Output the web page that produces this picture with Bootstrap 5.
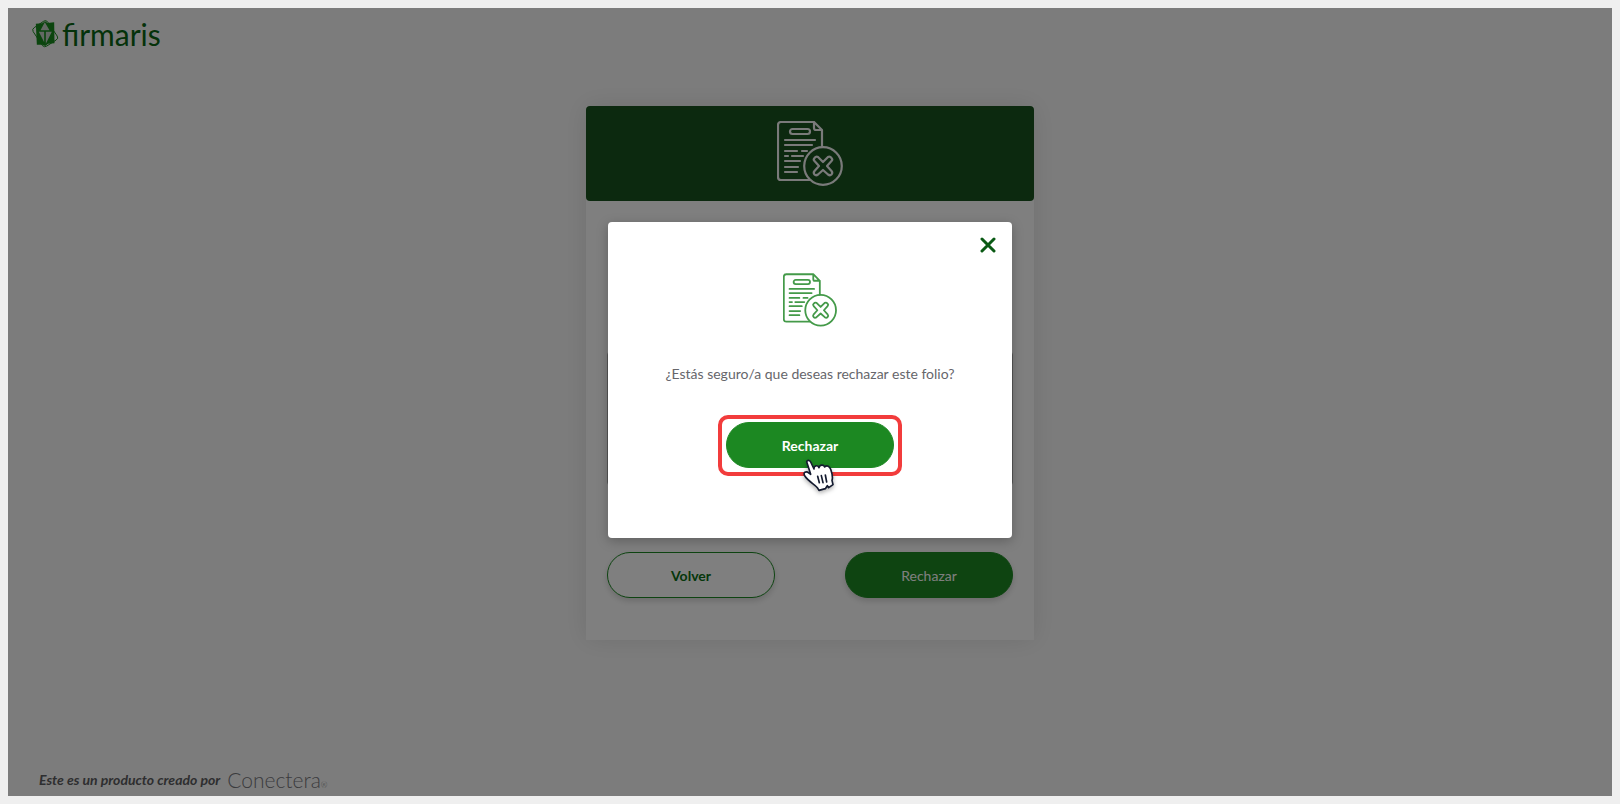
<!DOCTYPE html>
<html lang="es">
<head>
<meta charset="utf-8">
<meta name="viewport" content="width=device-width, initial-scale=1">
<title>firmaris</title>
<link href="https://cdn.jsdelivr.net/npm/bootstrap@5.3.0/dist/css/bootstrap.min.css" rel="stylesheet">
<style>
  body { font-family: Lato, sans-serif; font-size: 14px; background: #efefef; color: #66666b; }
  .app-screen { background: #f9f9f9; }
  .app-header { padding: 10px 24px 0; height: 98px; }
  .brand { color: #0a6414; font-size: 30px; line-height: 32px; gap: 3px; }
  .brand:hover { color: #0a6414; }
  .folio-card { width: 448px; max-width: 100%; background: #fff; box-shadow: 0 0 24px rgba(0,0,0,.1); }
  .folio-head { height: 95px; background: #18521e; color: #f4f4f4; border-radius: 4px; }
  .folio-body { padding: 150px 21px 42px; }
  .folio-body textarea { height: 135px; margin-bottom: 66px; border: 1px solid #aaa; border-radius: 4px; resize: none; }
  .btn-pill { width: 168px; height: 46px; border-radius: 23px; font-size: 14px; padding: 0; --bs-btn-border-color: #1c8822; --bs-btn-hover-border-color: #1c8822; }
  .btn-solid { --bs-btn-bg: #1c8822; --bs-btn-color: #fff; --bs-btn-hover-bg: #18751d; --bs-btn-hover-color: #fff; }
  .btn-hollow { --bs-btn-bg: #fff; --bs-btn-color: #0a6e14; --bs-btn-hover-bg: #eef7ee; --bs-btn-hover-color: #0a6e14; }
  .btn-lifted { box-shadow: 0 3px 6px rgba(0,0,0,.16); }
  .app-footer { padding: 0 31px 4px; color: #5c5c60; gap: 7px; line-height: 24px; }
  .maker { font-size: 21px; font-weight: 300; color: #77777c; }
  .maker sup { font-size: 8px; top: 0; }
  .dim { inset: 0; background: rgba(0,0,0,.5); }
  .modal { --bs-modal-width: 404px; --bs-modal-margin: 0px; --bs-modal-border-width: 0px; --bs-modal-border-radius: 4px; }
  .confirm-box { margin-top: 214px !important; }
  .confirm-box .modal-content { box-shadow: 0 3px 12px rgba(0,0,0,.25); padding-bottom: 62px; }
  .confirm-close { width: 16px; height: 16px; color: #0a5a14; margin: 15px 16px 20px auto; }
  .confirm-text { margin: 36px 0 30px; line-height: 22px; }
  .highlight { border: 4px solid #f23c3c; border-radius: 10px; padding: 3px 4px 4px; }
  .pointer { left: 80px; top: 40px; filter: drop-shadow(0 2px 2px rgba(0,0,0,.3)); pointer-events: none; }
</style>
</head>
<body>
<svg class="d-none" aria-hidden="true">
  <symbol id="doc-reject" viewBox="0 0 66 65">
    <g fill="none" stroke="currentColor" stroke-width="2.200" stroke-linecap="round" stroke-linejoin="round">
      <path d="M33 59H4Q1 59 1 56V4Q1 1 4 1H37L45 9V26M37 1V7Q37 9 39 9H45"/>
      <rect x="13" y="8" width="20" height="5" rx="2.500"/>
      <path d="M8 19H38M8 24H35M8 30H20M25 30H30M8 35H11M15 35H26M8 40H23M8 46H21M8 51H20"/>
      <circle cx="46" cy="45" r="18.800"/>
      <path d="M46 41L51 36Q53 35 54.500 37Q56 38.500 54.500 40L50 45L54.500 50Q56 52 54.500 53.500Q53 55 51 53.500L46 49L41 53.500Q39 55 37.500 53.500Q36 52 37.500 50L42 45L37.500 40Q36 38.500 37.500 37Q39 35 41 36Z"/>
    </g>
  </symbol>
</svg>
<div class="vh-100 p-2">
  <div class="app-screen h-100 position-relative d-flex flex-column">
    <header class="app-header">
      <a href="#" class="brand d-inline-flex align-items-center text-decoration-none">
        <svg width="27" height="28" viewBox="96 62 80 84" aria-hidden="true">
          <path fill="none" stroke="#168a1c" stroke-width="3" stroke-linejoin="round" d="M130 66Q136 61 142 67L171 110Q176 117 168 122L140 140Q133 145 127 139L99 97Q95 89 102 85Z"/>
          <path fill="#168a1c" d="M107 73L126 72L135 66L142 71L162 69L163 132L144 133L135 140L126 136L110 136Z"/>
          <path fill="#c9d3c9" d="M134 69L148 93H121ZM116 97H132V129ZM137 97H155L137 133Z"/>
        </svg>
        <span>firmaris</span>
      </a>
    </header>
    <main class="flex-grow-1">
      <section class="folio-card mx-auto">
        <div class="folio-head d-flex justify-content-center align-items-center">
          <svg width="66" height="65" aria-hidden="true"><use href="#doc-reject"/></svg>
        </div>
        <div class="folio-body">
          <textarea class="form-control" aria-label="Motivo"></textarea>
          <div class="d-flex justify-content-between">
            <button type="button" class="btn btn-pill btn-hollow btn-lifted fw-bold">Volver</button>
            <button type="button" class="btn btn-pill btn-solid btn-lifted">Rechazar</button>
          </div>
        </div>
      </section>
    </main>
    <footer class="app-footer d-flex align-items-center">
      <em class="fw-bold">Este es un producto creado por</em>
      <span class="maker">Conectera<sup>®</sup></span>
    </footer>
    <div class="dim position-absolute"></div>
    <div class="modal show d-block position-absolute" tabindex="-1" role="dialog" aria-modal="true" aria-labelledby="confirm-text">
      <div class="modal-dialog confirm-box mx-auto">
        <div class="modal-content align-items-center">
          <button type="button" class="confirm-close btn p-0 border-0 d-flex" aria-label="Cerrar">
            <svg width="16" height="16" viewBox="0 0 16 16" aria-hidden="true"><path d="M2 2L14 14M14 2L2 14" stroke="currentColor" stroke-width="3" stroke-linecap="round"/></svg>
          </button>
          <svg width="54" height="54" color="#449a49" aria-hidden="true"><use href="#doc-reject"/></svg>
          <p id="confirm-text" class="confirm-text">¿Estás seguro/a que deseas rechazar este folio?</p>
          <div class="highlight position-relative">
            <button type="button" class="btn btn-pill btn-solid fw-bold d-block">Rechazar</button>
            <svg class="pointer position-absolute" width="32" height="34" viewBox="66 60 96 102" aria-hidden="true">
              <path fill="#fff" stroke="#141b30" stroke-width="5" stroke-linejoin="round" d="M80 68C82 62 89 63 92 69L102 90C101 79 113 77 117 86C119 76 131 76 134 84C141 77 149 82 152 91C156 103 160 112 156 124L159 137L146 146L142 140L136 149L117 154L112 146C104 136 86 128 75 112C67 100 78 95 87 102L92 106Z"/>
              <path fill="none" stroke="#141b30" stroke-width="5" stroke-linecap="round" d="M113 112L118 131M124 110L129 131M136 108L140 129"/>
            </svg>
          </div>
        </div>
      </div>
    </div>
  </div>
</div>
<script src="https://cdn.jsdelivr.net/npm/bootstrap@5.3.0/dist/js/bootstrap.bundle.min.js"></script>
</body>
</html>
